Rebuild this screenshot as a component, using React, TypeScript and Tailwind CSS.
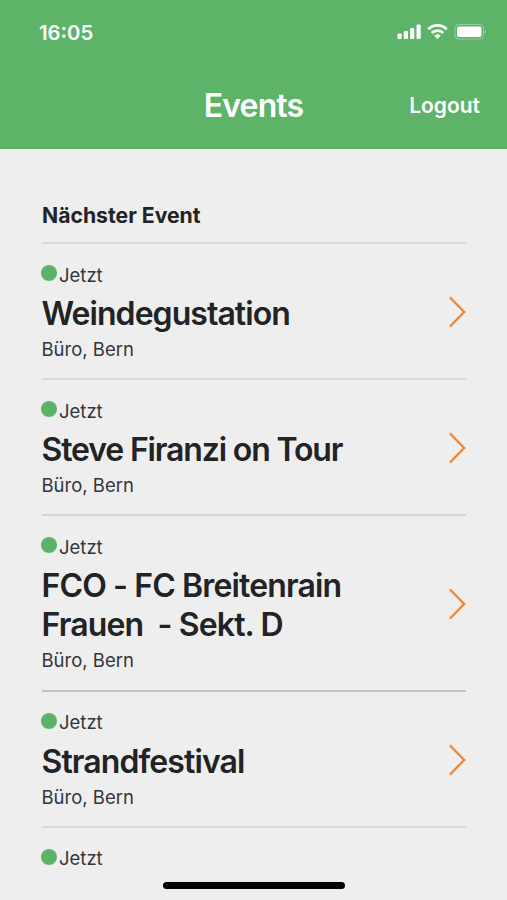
import clsx from "clsx";

type EventEntry = {
   id: number;
   title?: string[];
   location?: string;
   tracking?: string;
   border: string;
};

const events: EventEntry[] = [
   { id: 1, title: ["Weindegustation"], location: "Büro, Bern", tracking: "tracking-[-0.95px]", border: "border-[#dadada]" },
   { id: 2, title: ["Steve Firanzi on Tour"], location: "Büro, Bern", tracking: "tracking-[-1.15px]", border: "border-[#dadada]" },
   { id: 3, title: ["FCO - FC Breitenrain", "Frauen  - Sekt. D"], location: "Büro, Bern", tracking: "tracking-[-0.87px]", border: "border-[#d5d5d5]" },
   { id: 4, title: ["Strandfestival"], location: "Büro, Bern", tracking: "tracking-[-0.9px]", border: "border-[#c4c4c4]" },
   { id: 5, border: "border-[#dadada]" },
];

function StatusIcons() {
   return (
      <svg width="90" height="18" viewBox="0 0 90 18" fill="white">
         <rect x="0.5" y="10.5" width="4.2" height="5.5" rx="1.2" />
         <rect x="6.8" y="8" width="4.2" height="8" rx="1.2" />
         <rect x="13.1" y="5" width="4.2" height="11" rx="1.2" />
         <rect x="19.5" y="1.5" width="4.2" height="14.5" rx="1.2" />
         <g fill="none" stroke="white" strokeWidth="2.7">
            <path d="M31.3 6.2a13.2 13.2 0 0 1 18.4 0" />
            <path d="M34.7 9.9a8.5 8.5 0 0 1 11.6 0" />
         </g>
         <path d="M40.5 16l-3.2-3.2a4.7 4.7 0 0 1 6.4 0z" />
         <rect x="58" y="1.5" width="28.5" height="14.5" rx="4" fill="none" stroke="white" strokeOpacity=".35" />
         <rect x="60" y="3.5" width="24.5" height="10.5" rx="2" />
         <path d="M87.8 6.5c1.8.8 1.8 3.7 0 4.5z" opacity=".4" />
      </svg>
   );
}

function EventRow({ event }: { event: EventEntry }) {
   return (
      <li className={clsx("flex items-center justify-between border-t-2 pt-[19px] pb-[17px]", event.border)}>
         <div>
            <div className="flex h-6 items-center text-[18.5px] text-[#33353a]">
               <span className="mr-[2px] mb-[4px] -ml-px size-4 rounded-full bg-[#5db368]" />
               <span className="mt-px">Jetzt</span>
            </div>
            {event.title && (
               <h2 className={clsx("mt-[7px] -ml-[0.5px] text-[32px] leading-[39px] font-semibold", event.tracking)}>
                  {event.title.map((line) => (
                     <span key={line} className="block whitespace-pre">{line}</span>
                  ))}
               </h2>
            )}
            {event.location && (
               <p className="mt-[4px] -ml-[0.5px] text-[18.5px] leading-[24.2px] text-[#33353a]">{event.location}</p>
            )}
         </div>
         {event.title && (
            <svg width="18" height="32" viewBox="0 0 18 32" fill="none" stroke="#ef8632" strokeWidth="2.3" strokeLinecap="round">
               <path d="M2.5 2L16.2 16L2.5 30" />
            </svg>
         )}
      </li>
   );
}

export default function App() {
   return (
      <div className="relative h-[900px] w-[507px] overflow-hidden bg-[#eeeeee] font-['Inter','Liberation_Sans',sans-serif] text-[#212325]">
         <header className="h-[149px] bg-[#5db368] text-white">
            <div className="flex h-16 items-center justify-between pr-[20px] pl-[39px]">
               <span className="mt-[2px] text-[20.3px] font-semibold">16:05</span>
               <StatusIcons />
            </div>
            <div className="grid h-[84px] grid-cols-3 items-center">
               <h1 className="col-start-2 text-center text-[32px] font-semibold tracking-[-0.9px]">Events</h1>
               <button className="pr-[27px] text-right text-[21px] font-semibold">Logout</button>
            </div>
         </header>
         <main className="pr-[41px] pl-[42px]">
            <h3 className="flex h-[93px] items-end pb-[10px] text-[21.2px] font-bold">Nächster Event</h3>
            <ul>
               {events.map((event) => (
                  <EventRow key={event.id} event={event} />
               ))}
            </ul>
         </main>
         <div className="absolute bottom-[11px] left-[163px] h-[7px] w-[182px] rounded-full bg-black" />
      </div>
   );
}
